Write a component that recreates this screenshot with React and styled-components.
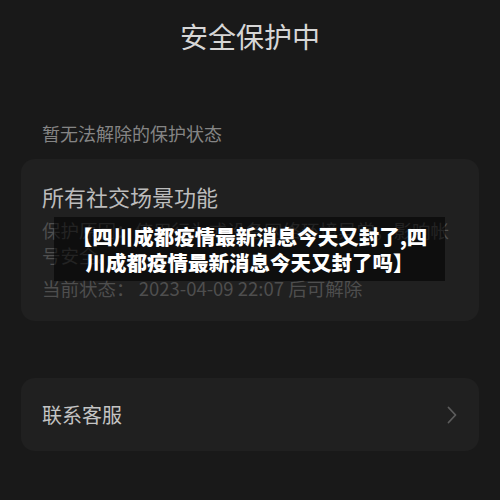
import styled, { createGlobalStyle } from "styled-components";

const GlobalStyle = createGlobalStyle`
    html, body {
        margin: 0;
        padding: 0;
        background-color: #191919;
    }
    body {
        font-family: "Noto Sans CJK SC", "Noto Sans", sans-serif;
    }
`

export default function App() {
    return (
        <Page>
            <GlobalStyle />
            <Title>安全保护中</Title>
            <Section>暂无法解除的保护状态</Section>
            <Card>
                <CardTitle>所有社交场景功能</CardTitle>
                <Reason>保护原因：使用行为或设备网络环境异常，影响帐号安全。</Reason>
                <Status>当前状态： 2023-04-09 22:07 后可解除</Status>
            </Card>
            <Caption>
                <span>【四川成都疫情最新消息今天又封了,四川成都疫情最新消息今天又封了吗】</span>
            </Caption>
            <RowCard>
                <RowLabel>联系客服</RowLabel>
                <svg width="10" height="18" viewBox="0 0 10 18">
                    <path d="M1.5 1.5 L8.5 9 L1.5 16.5" fill="none" stroke="#5c5c5c" strokeWidth="1.8" strokeLinecap="round" strokeLinejoin="round" />
                </svg>
            </RowCard>
        </Page>
    )
}

const Page = styled.div`
    position: relative;
    width: 500px;
    height: 500px;
    box-sizing: border-box;
    padding: 0 21px;
    display: flex;
    flex-direction: column;
    overflow: hidden;
`

const Title = styled.h1`
    margin: 16px 0 0;
    font-size: 28px;
    line-height: 40px;
    font-weight: 400;
    color: #d6d6d6;
    text-align: center;
`

const Section = styled.div`
    margin-top: 63px;
    padding-left: 21px;
    font-size: 18px;
    line-height: 28px;
    color: #858585;
`

const Card = styled.div`
    margin-top: 12px;
    background-color: #202020;
    border-radius: 14px;
    padding: 22px 21px 20px;
    display: flex;
    flex-direction: column;
`

const CardTitle = styled.div`
    font-size: 22px;
    line-height: 30px;
    color: #bcbcbc;
`

const Reason = styled.div`
    margin-top: 7px;
    font-size: 18.5px;
    line-height: 25px;
    color: #4e4e4e;
`

const Status = styled.div`
    margin-top: 7px;
    font-size: 18.5px;
    line-height: 26px;
    color: #4e4e4e;
`

const Caption = styled.div`
    position: absolute;
    left: 54px;
    top: 217px;
    width: 391px;
    height: 64px;
    background-color: rgba(0, 0, 0, 0.55);
    display: flex;
    align-items: center;
    justify-content: center;

    span {
        width: 372px;
        font-size: 20.5px;
        line-height: 26px;
        font-weight: 900;
        color: #ffffff;
        text-align: center;
    }
`

const RowCard = styled.div`
    margin-top: 57px;
    height: 73px;
    background-color: #202020;
    border-radius: 14px;
    padding: 0 22px 0 21px;
    display: flex;
    align-items: center;
    justify-content: space-between;
`

const RowLabel = styled.div`
    font-size: 20px;
    color: #c4c4c4;
`
